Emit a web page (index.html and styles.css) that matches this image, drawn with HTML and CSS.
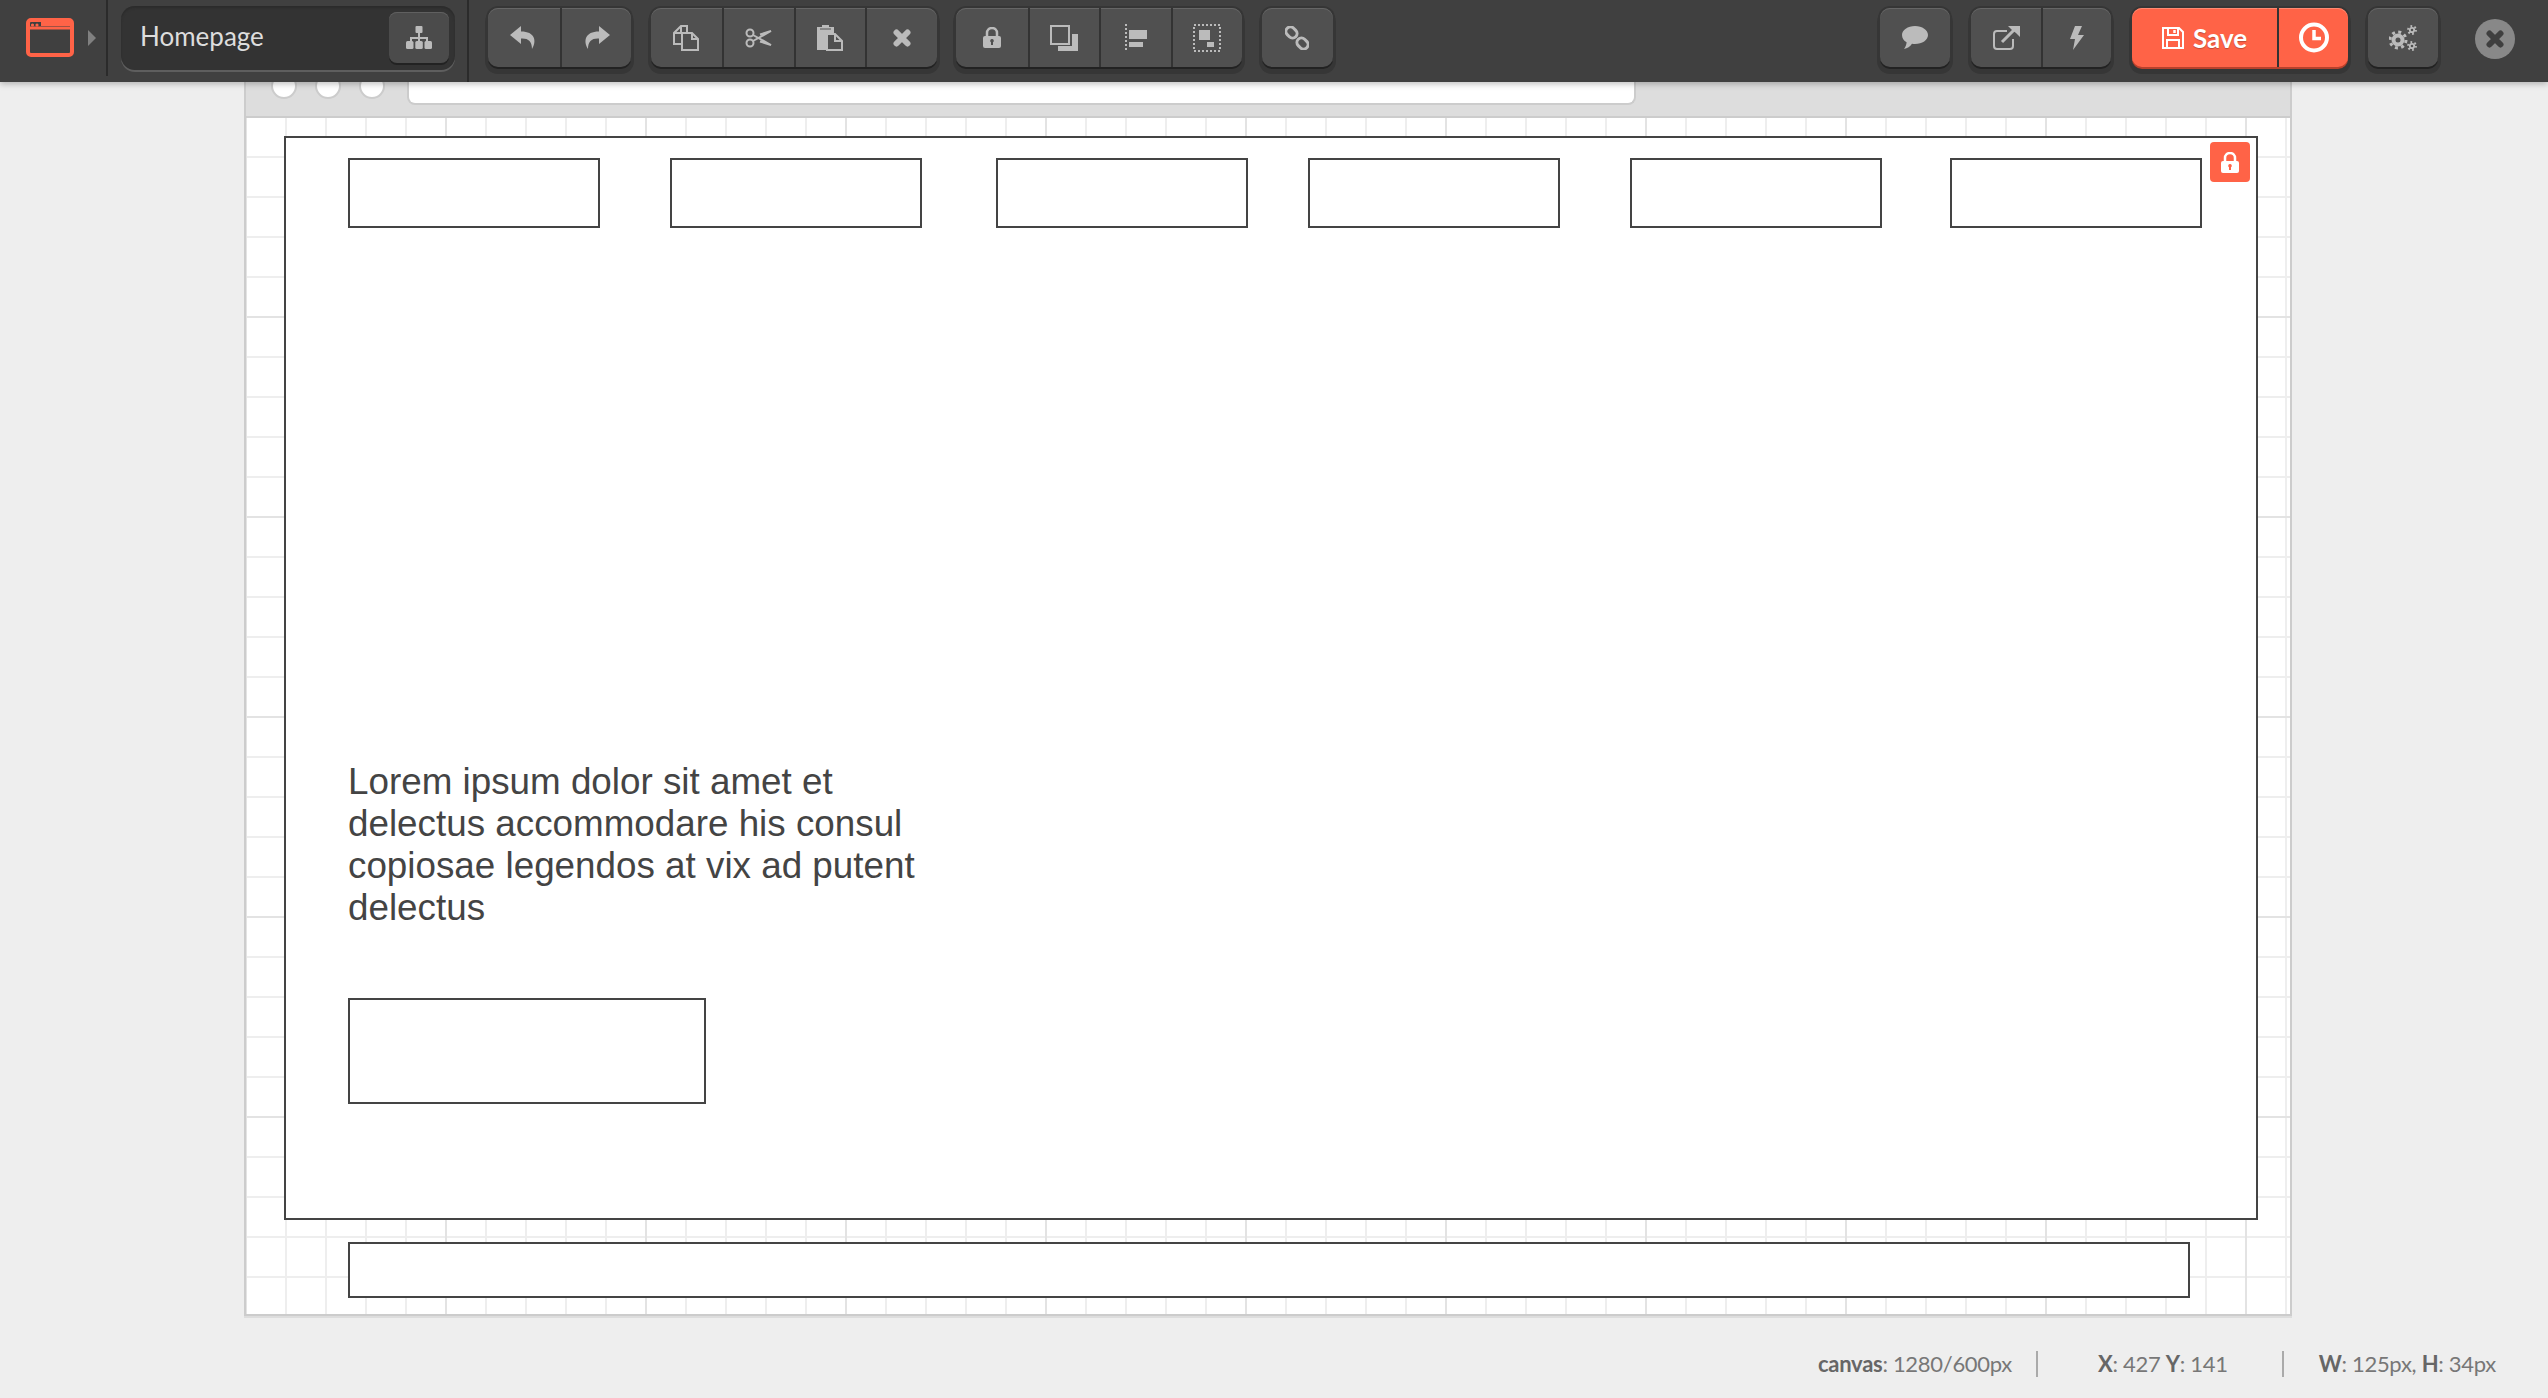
FILE: index.html
```html
<!DOCTYPE html>
<html lang="en">
<head>
  <meta charset="UTF-8" />
  <title>Homepage | Wireframe editor</title>
  <link rel="stylesheet" href="styles.css">
</head>
<body>

  <!-- Toolbar -->
  <header class="toolbar">
    <svg class="logo" viewBox="0 0 48 39"><rect x="2" y="2" width="44" height="35" rx="3" fill="none" stroke="#ff6347" stroke-width="4"/><path d="M2 10h44" stroke="#ff6347" stroke-width="3"/><circle cx="6.500" cy="7" r="1.600" fill="#ff6347"/><circle cx="11" cy="7" r="1.600" fill="#ff6347"/><path d="M15 6h29" stroke="#ff6347" stroke-width="4"/></svg>
    <span class="logo-arrow"></span>

    <div class="page-field">
      <span class="page-name">Homepage</span>
      <button class="sitemap-btn">
        <svg width="26" height="23" viewBox="0 0 26 23" fill="#bbb"><rect x="9.500" y="0" width="7" height="7" rx="1"/><path d="M12 7h2v4h8v4h-2v-2h-6v2h-2v-2H6v2H4v-4h8z"/><rect x="0" y="15" width="7.500" height="8" rx="1.500"/><rect x="9.300" y="15" width="7.500" height="8" rx="1.500"/><rect x="18.500" y="15" width="7.500" height="8" rx="1.500"/></svg>
      </button>
    </div>

    <div class="tool-groups">
      <div class="tool-group">
        <button class="tool"><svg width="27" height="23" viewBox="0 0 27 23" fill="#bbb"><path d="M11 0L0 9l11 9v-5.500c7-.5 11 2.500 11 10.500 5-8 3-17.500-11-17.500z"/></svg></button>
        <button class="tool"><svg class="flip" width="27" height="23" viewBox="0 0 27 23" fill="#bbb"><path d="M11 0L0 9l11 9v-5.500c7-.5 11 2.500 11 10.500 5-8 3-17.500-11-17.500z"/></svg></button>
      </div>

      <div class="tool-group">
        <button class="tool"><svg width="26" height="26" viewBox="0 0 26 26" fill="none" stroke="#bbb" stroke-width="2"><path d="M9 19H1V8l7-7h6v7"/><path d="M8 1v7H1"/><path d="M9 8h10l6 6v11H9z"/><path d="M19 8v6h6"/></svg></button>
        <button class="tool"><svg width="27" height="20" viewBox="0 0 27 20" fill="none" stroke="#bbb" stroke-width="2"><circle cx="5" cy="5" r="3.500"/><circle cx="5" cy="15" r="3.500"/><path d="M8 7l18 10-11-3.500"/><path d="M8 13l18-10-11 3.500"/></svg></button>
        <button class="tool"><svg width="26" height="26" viewBox="0 0 26 26"><path d="M0 2h5V0h7v2h5v23H0z" fill="#bbb"/><path d="M3 4h11" stroke="#777" stroke-width="1.500"/><path d="M10 9h8l7 7v9H10z" fill="#505050" stroke="#bbb" stroke-width="2"/><path d="M18 9v7h7" fill="none" stroke="#bbb" stroke-width="2"/></svg></button>
        <button class="tool"><svg width="18" height="18" viewBox="0 0 18 18" stroke="#bbb" stroke-width="6" stroke-linecap="round"><path d="M3.500 3.500l11 11M14.500 3.500l-11 11"/></svg></button>
      </div>

      <div class="tool-group">
        <button class="tool"><svg width="18" height="21" viewBox="0 0 18 21"><path d="M4 10V6a5 5 0 0 1 10 0v4" fill="none" stroke="#bbb" stroke-width="2.500"/><rect y="9" width="18" height="12" rx="2" fill="#bbb"/><path d="M9 12a1.800 1.800 0 0 1 1 3.300V18H8v-2.700A1.800 1.800 0 0 1 9 12z" fill="#505050"/></svg></button>
        <button class="tool"><svg width="28" height="26" viewBox="0 0 28 26"><rect x="1" y="1" width="18" height="18" fill="none" stroke="#bbb" stroke-width="2"/><path d="M22 9h6v17H8v-5h14z" fill="#bbb"/></svg></button>
        <button class="tool"><svg width="22" height="28" viewBox="0 0 22 28" fill="#bbb"><path d="M1 0v28" stroke="#bbb" stroke-width="2" stroke-dasharray="2 2"/><rect x="4" y="6" width="18" height="9"/><rect x="4" y="18" width="14" height="5"/></svg></button>
        <button class="tool"><svg width="28" height="28" viewBox="0 0 28 28" fill="#bbb"><rect x="1" y="1" width="26" height="26" fill="none" stroke="#bbb" stroke-width="2" stroke-dasharray="2 2"/><rect x="6" y="6" width="11" height="10"/><rect x="14" y="18" width="7" height="5"/></svg></button>
      </div>

      <div class="tool-group">
        <button class="tool"><svg width="24" height="24" viewBox="0 0 24 24" fill="none" stroke="#bbb" stroke-width="3"><rect x="-6" y="-4.500" width="12" height="9" rx="4.500" transform="translate(6.500 6.500) rotate(45)"/><rect x="-6" y="-4.500" width="12" height="9" rx="4.500" transform="translate(17.500 17.500) rotate(45)"/></svg></button>
      </div>

      <div class="tool-group tool-group-right">
        <button class="tool"><svg width="26" height="23" viewBox="0 0 26 23" fill="#bbb"><path d="M13 0c7.200 0 13 4 13 9s-5.800 9-13 9c-1 0-2-.1-3-.2C8 20.500 5.500 22.500 2 23c1.500-2 2.500-4.200 2.600-6.700C1.800 14.700 0 12 0 9c0-5 5.800-9 13-9z"/></svg></button>
      </div>

      <div class="tool-group tool-spaced">
        <button class="tool"><svg width="27" height="24" viewBox="0 0 27 24" fill="none" stroke="#bbb" stroke-width="2"><path d="M14 5H4a3 3 0 0 0-3 3v12a3 3 0 0 0 3 3h13a3 3 0 0 0 3-3v-7"/><path d="M9 16L21 4" stroke-width="3"/><path d="M15 0h12v11l-4-4-4-3z" fill="#bbb" stroke="none"/></svg></button>
        <button class="tool"><svg width="14" height="24" viewBox="0 0 14 24" fill="#bbb"><path d="M5 0L0 13h5L3 24l11-15H8l4-9z"/></svg></button>
      </div>

      <div class="tool-group save-group tool-spaced">
        <button class="tool save-btn">
          <svg width="22" height="22" viewBox="0 0 22 22" fill="none" stroke="#fff" stroke-width="2"><path d="M1 1h16l4 4v16H1z"/><path d="M6 1v7h10V1"/><path d="M5 21v-8h12v8"/><path d="M12.500 3v3" stroke-width="2.500"/></svg>
          <span>Save</span>
        </button>
        <button class="tool clock-btn"><svg width="30" height="31" viewBox="0 0 30 31" fill="none" stroke="#fff"><circle cx="15" cy="15.500" r="13" stroke-width="4"/><path d="M15 8v8.500h7" stroke-width="3.500"/></svg></button>
      </div>

      <div class="tool-group">
        <button class="tool"><svg width="28" height="26" viewBox="0 0 28 26" fill="none" stroke="#bbb"><circle cx="9" cy="15" r="4.500" stroke-width="4"/><circle cx="9" cy="15" r="8" stroke-width="3" stroke-dasharray="3 3.280"/><circle cx="23" cy="5" r="2.200" stroke-width="1.800"/><circle cx="23" cy="5" r="4" stroke-width="1.800" stroke-dasharray="1.800 2.390"/><circle cx="23" cy="21" r="2.200" stroke-width="1.800"/><circle cx="23" cy="21" r="4" stroke-width="1.800" stroke-dasharray="1.800 2.390"/></svg></button>
      </div>

      <button class="close-btn"><svg width="18" height="18" viewBox="0 0 18 18" stroke="#3f3f3f" stroke-width="6" stroke-linecap="round"><path d="M3.500 3.500l11 11M14.500 3.500l-11 11"/></svg></button>
    </div>
  </header>

  <!-- Canvas -->
  <main class="workspace">
    <div class="frame">
      <div class="frame-chrome">
        <span class="chrome-dot"></span>
        <span class="chrome-dot"></span>
        <span class="chrome-dot"></span>
        <span class="chrome-address"></span>
      </div>
      <div class="grid">
        <section class="stage">
          <div class="wire-nav">
            <div class="wire-box"></div>
            <div class="wire-box"></div>
            <div class="wire-box"></div>
            <div class="wire-box"></div>
            <div class="wire-box"></div>
            <div class="wire-box"></div>
          </div>
          <p class="wire-text">Lorem ipsum dolor sit amet et delectus accommodare his consul copiosae legendos at vix ad putent delectus</p>
          <div class="wire-button"></div>
          <span class="lock-badge">
            <svg width="18" height="21" viewBox="0 0 18 21"><path d="M4 10V6a5 5 0 0 1 10 0v4" fill="none" stroke="#fff" stroke-width="2.500"/><rect y="9" width="18" height="12" rx="2" fill="#fff"/><path d="M9 12a1.800 1.800 0 0 1 1 3.300V18H8v-2.700A1.800 1.800 0 0 1 9 12z" fill="#ff6347"/></svg>
          </span>
        </section>
        <div class="wire-footer"></div>
      </div>
    </div>
  </main>

  <!-- Status bar -->
  <footer class="statusbar">
    <span class="status-canvas"><b>canvas</b>: 1280/600px</span>
    <span class="status-coords"><b>X</b>: 427 <b>Y</b>: 141</span>
    <span class="status-size"><b>W</b>: 125px, <b>H</b>: 34px</span>
  </footer>

</body>
</html>
```

FILE: styles.css
```css
/* Reset & Base */
* { margin: 0; padding: 0; box-sizing: border-box; }
html, body { height: 100%; }
body {
  font-family: 'Lato', 'Open Sans', sans-serif;
  background: #eee;
  color: #666;
  overflow: hidden;
  display: flex;
  flex-direction: column;
}
button { border: none; background: none; font: inherit; color: inherit; cursor: pointer; }
svg { display: block; }

/* Toolbar */
.toolbar {
  position: relative; z-index: 2;
  flex: none;
  height: 82px;
  padding: 0 33px 0 26px;
  display: flex; align-items: flex-start;
  background: #404040;
  box-shadow: 0 2px 6px rgba(0,0,0,0.25);
}
.logo { width: 48px; height: 39px; margin-top: 18px; flex: none; }
.logo-arrow {
  width: 0; height: 0; flex: none;
  margin: 30px 10px 0 14px;
  border-left: 8px solid #808080;
  border-top: 8px solid transparent;
  border-bottom: 8px solid transparent;
}
.page-field {
  flex: none;
  width: 349px; height: 76px;
  padding: 6px 6px 0 32px;
  margin-right: 12px;
  border-left: 2px solid #2b2b2b;
  display: flex; align-items: flex-start; justify-content: space-between;
  position: relative;
}
.page-field::before {
  content: '';
  position: absolute; left: 13px; top: 6px; right: 0; height: 64px;
  background: #333;
  border-radius: 14px;
  box-shadow: inset 0 2px 2px #2c2c2c, 0 2px 0 #5e5e5e;
}
.page-name {
  position: relative;
  font-size: 26px; line-height: 60px;
  color: #ddd;
}
.sitemap-btn {
  position: relative;
  width: 60px; height: 51px;
  margin-top: 6px;
  display: flex; align-items: center; justify-content: center;
  background: #4b4b4b;
  border-radius: 8px;
  box-shadow: inset 0 1px 0 #606060, 0 2px 0 #222;
}

.tool-groups {
  flex: 1;
  height: 82px;
  padding: 8px 0 0 19px;
  border-left: 2px solid #2b2b2b;
  display: flex; align-items: flex-start; gap: 19.500px;
}
.tool-group {
  flex: none;
  display: flex;
  height: 59px;
  border-radius: 10px;
  background: #505050;
  box-shadow: inset 0 1px 0 #666, 0 2px 0 #222, 0 4px 0 3px #363636, 0 0 0 2px #363636;
}
.tool-group-right { margin-left: auto; }
.tool-spaced { margin-left: 1.500px; }
.tool {
  width: 71.500px; height: 59px;
  display: flex; align-items: center; justify-content: center;
  border-left: 2px solid #333;
}
.tool:first-child { border-left: none; }
.flip { transform: scaleX(-1); }

/* right hand groups are a touch narrower */
.tool-group-right .tool,
.tool-group-right ~ .tool-group .tool { width: 70px; }

.save-group {
  background: #ff6347;
  box-shadow: inset 0 1px 0 #ff8a72, 0 2px 0 #b8412c, 0 4px 0 3px #363636, 0 0 0 2px #363636;
}
.tool-group-right ~ .save-group .save-btn { width: 145px; }
.tool-group-right ~ .save-group .clock-btn { width: 71px; }
.save-btn { gap: 9px; color: #fff; }
.save-btn span {
  font-size: 26px; font-weight: 700;
  text-shadow: 0 1px 1px rgba(0,0,0,0.25);
}
.close-btn {
  flex: none;
  width: 40px; height: 40px;
  margin: 11px 0 0 18px;
  display: flex; align-items: center; justify-content: center;
  border-radius: 50%;
  background: #888;
}

/* Canvas frame */
.workspace { flex: none; height: 1234px; padding-left: 244px; }
.frame {
  width: 2048px; height: 100%;
  display: flex; flex-direction: column;
  border: 2px solid #ccc;
  border-top: none;
  box-shadow: 0 2px 0 #ddd;
}
.frame-chrome {
  flex: none;
  height: 36px;
  padding-left: 25px;
  overflow: hidden;
  display: flex; align-items: flex-start; gap: 18px;
  background: #ddd;
  border-bottom: 2px solid #ccc;
}
.chrome-dot {
  flex: none;
  width: 26px; height: 26px;
  margin-top: -9px;
  border-radius: 50%;
  background: #fff;
  border: 2px solid #ccc;
}
.chrome-address {
  flex: none;
  width: 1229px; height: 23px;
  margin-left: 4px;
  background: #fff;
  border: 2px solid #ccc;
  border-top: none;
  border-radius: 0 0 8px 8px;
}
.grid {
  flex: 1;
  padding: 18px 0 0 38px;
  background-color: #fff;
  background-image:
    linear-gradient(to right, #e3e3e3 2px, transparent 2px),
    linear-gradient(to bottom, #e3e3e3 2px, transparent 2px),
    linear-gradient(to right, #eee 2px, transparent 2px),
    linear-gradient(to bottom, #eee 2px, transparent 2px);
  background-size: 200px 200px, 200px 200px, 40px 40px, 40px 40px;
  background-position: 199px 0, 0 198px, 39px 0, 0 38px;
}

/* Wireframe elements */
.stage {
  position: relative;
  width: 1974px; height: 1084px;
  padding: 20px 0 0 62px;
  background: #fff;
  border: 2px solid #444;
}
.wire-nav { display: flex; }
.wire-box { width: 252px; height: 70px; background: #fff; border: 2px solid #444; }
.wire-box:nth-child(2) { margin-left: 70px; }
.wire-box:nth-child(3) { margin-left: 74px; }
.wire-box:nth-child(4) { margin-left: 60px; }
.wire-box:nth-child(5) { margin-left: 70px; }
.wire-box:nth-child(6) { margin-left: 68px; }
.wire-text {
  width: 590px;
  margin-top: 533px;
  font-family: 'Liberation Sans', Arial, sans-serif;
  font-size: 36.800px; line-height: 42px;
  color: #444;
}
.wire-button { width: 358px; height: 106px; margin-top: 69px; border: 2px solid #444; }
.wire-footer {
  width: 1842px; height: 56px;
  margin: 22px 0 0 64px;
  background: #fff;
  border: 2px solid #444;
}
.lock-badge {
  position: absolute; top: 4px; right: 6px;
  width: 40px; height: 40px;
  display: flex; align-items: center; justify-content: center;
  background: #ff6347;
  border-radius: 4px;
}

/* Status bar */
.statusbar {
  flex: 1;
  padding: 35px 52px 0 0;
  display: flex; align-items: flex-start; justify-content: flex-end;
  font-size: 22px; line-height: 26px;
  letter-spacing: -0.3px;
  color: #777;
}
.statusbar b { color: #666; }
.status-coords { margin-left: 24px; padding-left: 60px; border-left: 2px solid #aaa; }
.status-size { margin-left: 54px; padding-left: 35px; border-left: 2px solid #aaa; }
```
